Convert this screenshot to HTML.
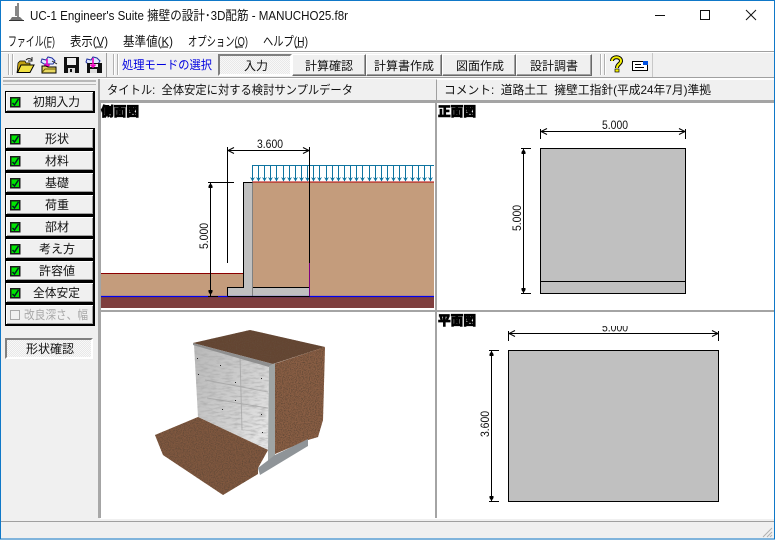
<!DOCTYPE html>
<html lang="ja"><head><meta charset="utf-8"><title>UC-1</title>
<style>
html,body{margin:0;padding:0;width:775px;height:540px;overflow:hidden;background:#f0f0f0}
#w{position:relative;width:775px;height:540px;overflow:hidden;background:#f0f0f0;font-family:"Liberation Sans","Noto Sans CJK JP",sans-serif}
.a{position:absolute;box-sizing:border-box}
.lb{background:#f0f0f0;border:1px solid #000;border-right:2px solid #000;border-bottom:2px solid #000;box-shadow:inset 1px 1px 0 #fff,inset -1px -1px 0 #a0a0a0}
.tb{background:#f0f0f0;border:1px solid;border-color:#fff #696969 #696969 #fff;box-shadow:inset -1px -1px 0 #a0a0a0}
svg{position:absolute;left:0;top:0}
text{font-family:"Liberation Sans","Noto Sans CJK JP",sans-serif;font-size:12px;fill:#111}
</style></head><body><div id="w">
<div class="a" style="left:0;top:0;width:775px;height:51px;background:#fff"></div>
<div class="a" style="left:0;top:51px;width:775px;height:1px;background:#a0a0a0"></div>
<div class="a" style="left:0;top:52px;width:775px;height:1px;background:#fff"></div>
<div class="a" style="left:3px;top:77px;width:772px;height:1px;background:#a0a0a0"></div>
<div class="a" style="left:3px;top:78px;width:772px;height:1px;background:#fff"></div>
<div class="a" style="left:106px;top:53px;width:1px;height:24px;background:#a0a0a0"></div>
<div class="a" style="left:652px;top:53px;width:1px;height:24px;background:#c8c8c8"></div>
<div class="a" style="left:218px;top:54px;width:74px;height:22px;border:2px solid;border-color:#808080 #fff #fff #808080;background:repeating-conic-gradient(#f8f8f8 0 25%,#e8e8e8 0 50%) 0 0/2px 2px"></div>
<div class="a tb" style="left:292px;top:54px;width:74px;height:22px"></div>
<div class="a tb" style="left:366px;top:54px;width:76px;height:22px"></div>
<div class="a tb" style="left:442px;top:54px;width:74px;height:22px"></div>
<div class="a tb" style="left:516px;top:54px;width:76px;height:22px"></div>
<div class="a" style="left:100px;top:79px;width:335px;height:22px;background:#f0f0f0"></div>
<div class="a" style="left:436px;top:79px;width:339px;height:22px;background:#f0f0f0;border-left:1px solid #a0a0a0;border-top:1px solid #fff"></div>
<div class="a" style="left:3px;top:80px;width:93px;height:2px;background:#b8b8b8"></div>
<div class="a" style="left:3px;top:84px;width:93px;height:1px;background:#b8b8b8"></div>
<div class="a" style="left:98px;top:79px;width:2px;height:439px;background:#a8a8a8"></div>
<div class="a" style="left:100px;top:100px;width:674px;height:419px;background:#fff"></div>
<div class="a" style="left:100px;top:100px;width:674px;height:3px;background:#a4a4a4"></div>
<div class="a" style="left:100px;top:310px;width:674px;height:2px;background:#a4a4a4"></div>
<div class="a" style="left:435px;top:100px;width:2px;height:418px;background:#a4a4a4"></div>
<div class="a" style="left:100px;top:100px;width:1px;height:418px;background:#a4a4a4"></div>
<div class="a" style="left:0;top:521px;width:775px;height:1px;background:#a0a0a0"></div>
<div class="a lb" style="left:5px;top:91px;width:90px;height:22px"></div>
<div class="a lb" style="left:5px;top:128px;width:90px;height:22px"></div>
<div class="a lb" style="left:5px;top:150px;width:90px;height:22px"></div>
<div class="a lb" style="left:5px;top:172px;width:90px;height:22px"></div>
<div class="a lb" style="left:5px;top:194px;width:90px;height:22px"></div>
<div class="a lb" style="left:5px;top:216px;width:90px;height:22px"></div>
<div class="a lb" style="left:5px;top:238px;width:90px;height:22px"></div>
<div class="a lb" style="left:5px;top:260px;width:90px;height:22px"></div>
<div class="a lb" style="left:5px;top:282px;width:90px;height:22px"></div>
<div class="a lb" style="left:5px;top:304px;width:90px;height:22px"></div>
<div class="a" style="left:5px;top:338px;width:88px;height:21px;border:2px solid;border-color:#808080 #fff #fff #808080;background:repeating-conic-gradient(#f8f8f8 0 25%,#e8e8e8 0 50%) 0 0/2px 2px"></div>

<svg width="775" height="540" viewBox="0 0 775 540" xmlns="http://www.w3.org/2000/svg">
<defs>
<g id="ar"><path d="M0 0V16" fill="none" stroke="#0f74a0"/><path d="M-2.500 12 0 16.500 2.500 12 0 13.500Z" fill="#0f74a0"/></g>
<filter id="soil" x="0" y="0" width="100%" height="100%"><feTurbulence type="fractalNoise" baseFrequency=".85" numOctaves="2" seed="4"/><feColorMatrix values="0 0 0 0 .13 0 0 0 0 .07 0 0 0 0 .04 0 0 0 3 -1.200"/><feComposite in2="SourceGraphic" operator="in" result="n"/><feMerge><feMergeNode in="SourceGraphic"/><feMergeNode in="n"/></feMerge></filter>
<filter id="conc" x="0" y="0" width="100%" height="100%"><feTurbulence type="fractalNoise" baseFrequency=".12 .5" numOctaves="3" seed="7"/><feColorMatrix values="0 0 0 0 .4 0 0 0 0 .4 0 0 0 0 .4 0 0 0 1.800 -.750"/><feComposite in2="SourceGraphic" operator="in" result="n"/><feMerge><feMergeNode in="SourceGraphic"/><feMergeNode in="n"/></feMerge></filter>
<linearGradient id="cg" x1="0" y1="0" x2="1" y2=".7"><stop offset="0" stop-color="#b8b8b8"/><stop offset=".65" stop-color="#d0d0d0"/><stop offset="1" stop-color="#e4e4e4"/></linearGradient>
<clipPath id="clipPlan"><rect x="438" y="326" width="336" height="30"/></clipPath>
</defs>

<rect x=".5" y=".5" width="774" height="538.500" fill="none" stroke="#0f78c8"/>

<path d="M16 6V16M18 3V17" stroke="#555" stroke-width="1.400" fill="none"/>
<path d="M12 17H20L23 20H10Z" fill="#777"/><path d="M9 20.500H24" stroke="#333"/>
<text x="30" y="20" textLength="318" lengthAdjust="spacingAndGlyphs" style="font-size:13px">UC-1 Engineer's Suite 擁壁の設計･3D配筋 - MANUCHO25.f8r</text>

<path d="M655 15.500H665" stroke="#111"/>
<rect x="700.500" y="10.500" width="9" height="9" fill="none" stroke="#111"/>
<path d="M746 10 756 20M756 10 746 20" stroke="#111" fill="none"/>

<text x="8" y="46" textLength="47" lengthAdjust="spacingAndGlyphs" style="font-size:13px">ファイル(F)</text><path d="M47 47H51" stroke="#111"/>
<text x="70" y="46" textLength="38" lengthAdjust="spacingAndGlyphs" style="font-size:13px">表示(V)</text><path d="M96 47H103" stroke="#111"/>
<text x="123" y="46" textLength="50" lengthAdjust="spacingAndGlyphs" style="font-size:13px">基準値(K)</text><path d="M161 47H168" stroke="#111"/>
<text x="188" y="46" textLength="60" lengthAdjust="spacingAndGlyphs" style="font-size:13px">オプション(O)</text><path d="M235 47H243" stroke="#111"/>
<text x="263" y="46" textLength="45" lengthAdjust="spacingAndGlyphs" style="font-size:13px">ヘルプ(H)</text><path d="M295 47H303" stroke="#111"/>

<path d="M8.500 54V75M12.500 54V75M113.500 54V75M117.500 54V75M600.500 54V75M604.500 54V75" stroke="#b0b0b0"/>
<path d="M9.500 54V75M13.500 54V75M114.500 54V75M118.500 54V75M601.500 54V75M605.500 54V75" stroke="#fff"/>

<path d="M18 63 20 61H25L26 63H30V65H22L17 73Z" fill="#c0a010" stroke="#000" stroke-width=".7"/>
<path d="M17.500 72.500 21 65H34L30 72.500Z" fill="#f0e040" stroke="#000"/>
<path d="M26 60C28 58 30 58 32 60M32 57V61H28" fill="none" stroke="#222"/>
<path d="M44 64 41 62 42 59 46 60 48 57 52 58 55 61 53 64Z" fill="#dfe8ff" stroke="#2030a0"/>
<path d="M47 59V67M44.500 64.500 47 67 49.500 64.500" fill="none" stroke="#f000c0" stroke-width="1.600"/>
<path d="M42 73V66H46L48 67H56V73Z" fill="#e8d860" stroke="#000"/>
<path d="M42 72.500 45 69H56" fill="none" stroke="#6a5a00"/>
<path d="M52 61 57 64" stroke="#222" fill="none"/>
<path d="M64 57H79V73H64Z" fill="#111"/><rect x="67" y="58" width="9" height="7" fill="#eee"/><rect x="68" y="68" width="7" height="5" fill="#ddd"/><rect x="70" y="69" width="2" height="3" fill="#111"/>
<path d="M88 64 86 62 87 59 91 60 93 57 97 58 100 61 98 64Z" fill="#dfe8ff" stroke="#2030a0"/>
<path d="M87 63H102V73H87Z" fill="#111"/><rect x="90" y="64" width="8" height="3" fill="#eee"/><rect x="90" y="69" width="7" height="4" fill="#ddd"/>
<path d="M93 58V67M90.500 64.500 93 67 95.500 64.500" fill="none" stroke="#f000c0" stroke-width="1.600"/>

<text x="122" y="69" textLength="90" lengthAdjust="spacingAndGlyphs" style="fill:#0000e0">処理モードの選択</text>
<text x="244" y="70" textLength="24" lengthAdjust="spacingAndGlyphs">入力</text>
<text x="305" y="70" textLength="48" lengthAdjust="spacingAndGlyphs">計算確認</text>
<text x="374" y="70" textLength="60" lengthAdjust="spacingAndGlyphs">計算書作成</text>
<text x="456" y="70" textLength="48" lengthAdjust="spacingAndGlyphs">図面作成</text>
<text x="530" y="70" textLength="48" lengthAdjust="spacingAndGlyphs">設計調書</text>

<path d="M612 61C612 56 621 56 621 61C621 64 617 64 617 68" fill="none" stroke="#000" stroke-width="4"/>
<path d="M612 61C612 56 621 56 621 61C621 64 617 64 617 68" fill="none" stroke="#f4f000" stroke-width="2"/>
<rect x="615" y="69" width="4" height="3" fill="#f4f000" stroke="#000" stroke-width=".7"/>
<rect x="632.500" y="61.500" width="15" height="9" fill="#fff" stroke="#000"/>
<rect x="643" y="61" width="5" height="4" fill="#0050e0"/>
<path d="M635 64.500H641M635 67.500H644" stroke="#000"/>

<text x="107" y="94" textLength="246" lengthAdjust="spacingAndGlyphs">タイトル:&#160; 全体安定に対する検討サンプルデータ</text>
<text x="444" y="94" textLength="267" lengthAdjust="spacingAndGlyphs">コメント:&#160; 道路土工&#160; 擁壁工指針(平成24年7月)準拠</text>

<g stroke="#1a1a1a" stroke-width="1.500" fill="#00e600">
<rect x="10.750" y="97.750" width="9" height="9"/><rect x="10.750" y="134.750" width="9" height="9"/><rect x="10.750" y="156.750" width="9" height="9"/><rect x="10.750" y="178.750" width="9" height="9"/><rect x="10.750" y="200.750" width="9" height="9"/><rect x="10.750" y="222.750" width="9" height="9"/><rect x="10.750" y="244.750" width="9" height="9"/><rect x="10.750" y="266.750" width="9" height="9"/><rect x="10.750" y="288.750" width="9" height="9"/>
</g>
<g fill="none" stroke="#022" stroke-width="1.500">
<path d="M12.500 103 14.500 105 18.500 99M12.500 140 14.500 142 18.500 136M12.500 162 14.500 164 18.500 158M12.500 184 14.500 186 18.500 180M12.500 206 14.500 208 18.500 202M12.500 228 14.500 230 18.500 224M12.500 250 14.500 252 18.500 246M12.500 272 14.500 274 18.500 268M12.500 294 14.500 296 18.500 290"/>
</g>
<rect x="10.500" y="310.500" width="9" height="9" fill="none" stroke="#a8a8a8"/>

<text x="33" y="106" textLength="47" lengthAdjust="spacingAndGlyphs">初期入力</text>
<text x="45" y="143" textLength="24" lengthAdjust="spacingAndGlyphs">形状</text>
<text x="45" y="165" textLength="24" lengthAdjust="spacingAndGlyphs">材料</text>
<text x="45" y="187" textLength="24" lengthAdjust="spacingAndGlyphs">基礎</text>
<text x="45" y="209" textLength="24" lengthAdjust="spacingAndGlyphs">荷重</text>
<text x="45" y="231" textLength="24" lengthAdjust="spacingAndGlyphs">部材</text>
<text x="39" y="253" textLength="36" lengthAdjust="spacingAndGlyphs">考え方</text>
<text x="39" y="275" textLength="36" lengthAdjust="spacingAndGlyphs">許容値</text>
<text x="33" y="297" textLength="47" lengthAdjust="spacingAndGlyphs">全体安定</text>
<text x="24" y="319" textLength="64" lengthAdjust="spacingAndGlyphs" style="fill:#a8a8a8">改良深さ、幅</text>
<text x="26" y="353" textLength="48" lengthAdjust="spacingAndGlyphs">形状確認</text>

<!-- side view -->
<rect x="101" y="297" width="333" height="11" fill="#7f3f3f"/>
<rect x="101" y="274" width="143" height="22" fill="#c49c7c"/>
<rect x="252" y="182" width="182" height="114" fill="#c49c7c"/>
<path d="M101 273.500H243" stroke="#8b0000"/>
<path d="M252 182H434" stroke="#b00000"/>
<path d="M243.500 182.500H252.500V287.500H309.500V296.500H227.500V287.500H243.500Z" fill="#c0c0c0" stroke="#000"/>
<path d="M252.500 182.500V296" stroke="#808080"/>
<path d="M101 296.500H434" stroke="#0000f0" stroke-width="1.200"/>
<path d="M227.500 296.500H309.500" stroke="#000"/>
<g transform="translate(0,165)">
<use href="#ar" x="252.500"/><use href="#ar" x="258.500"/><use href="#ar" x="264.500"/><use href="#ar" x="270.500"/><use href="#ar" x="276.500"/><use href="#ar" x="283.500"/><use href="#ar" x="289.500"/><use href="#ar" x="295.500"/><use href="#ar" x="301.500"/><use href="#ar" x="307.500"/><use href="#ar" x="313.500"/><use href="#ar" x="319.500"/><use href="#ar" x="326.500"/><use href="#ar" x="332.500"/><use href="#ar" x="338.500"/><use href="#ar" x="344.500"/><use href="#ar" x="350.500"/><use href="#ar" x="356.500"/><use href="#ar" x="362.500"/><use href="#ar" x="369.500"/><use href="#ar" x="375.500"/><use href="#ar" x="381.500"/><use href="#ar" x="387.500"/><use href="#ar" x="393.500"/><use href="#ar" x="399.500"/><use href="#ar" x="405.500"/><use href="#ar" x="412.500"/><use href="#ar" x="418.500"/><use href="#ar" x="424.500"/><use href="#ar" x="430.500"/>
</g>
<path d="M252 165.500H434" stroke="#0f74a0"/>
<g fill="none" stroke="#000">
<path d="M227.500 147V263M309.500 147V263M228 150.500H309"/>
<path d="M234 147.500 228 150.500 234 153.500M303 147.500 309 150.500 303 153.500"/>
<path d="M208 182.500H234M208 296.500H218M210.500 182V296"/>
</g>
<path d="M309.500 263V296" stroke="#800080"/>
<path d="M208.500 186 210.500 183 212.500 186V188H208.500ZM208.500 292 210.500 295 212.500 292V290H208.500Z" fill="#000"/>
<text x="257" y="148" textLength="26" lengthAdjust="spacingAndGlyphs">3.600</text>
<text transform="translate(208,249) rotate(-90)" x="0" y="0" textLength="26" lengthAdjust="spacingAndGlyphs">5.000</text>
<text x="101" y="116" textLength="38" lengthAdjust="spacingAndGlyphs" style="font-size:13px;font-weight:900;fill:#000;stroke:#000;stroke-width:.7">側面図</text>

<!-- front view -->
<rect x="540.500" y="148.500" width="145" height="145" fill="#c0c0c0" stroke="#000"/>
<path d="M540.500 281.500H685.500" stroke="#000"/>
<g fill="none" stroke="#000">
<path d="M540.500 129V139M685.500 129V139M541 131.500H685M547 128.500 541 131.500 547 134.500M679 128.500 685 131.500 679 134.500"/>
<path d="M521 148.500H531M521 293.500H531M523.500 149V293"/>
</g>
<path d="M521.500 152 523.500 149 525.500 152V154H521.500ZM521.500 290 523.500 293 525.500 290V288H521.500Z" fill="#000"/>
<text x="602" y="129" textLength="26" lengthAdjust="spacingAndGlyphs">5.000</text>
<text transform="translate(521,231) rotate(-90)" textLength="26" lengthAdjust="spacingAndGlyphs">5.000</text>
<text x="438" y="116" textLength="38" lengthAdjust="spacingAndGlyphs" style="font-size:13px;font-weight:900;fill:#000;stroke:#000;stroke-width:.7">正面図</text>

<!-- plan view -->
<rect x="508.500" y="350.500" width="210" height="151" fill="#c0c0c0" stroke="#000"/>
<g fill="none" stroke="#000">
<path d="M508.500 331V341M718.500 331V341M509 333.500H718M515 330.500 509 333.500 515 336.500M712 330.500 718 333.500 712 336.500"/>
<path d="M489 350.500H499M489 501.500H499M491.500 351V501"/>
</g>
<path d="M489.500 354 491.500 351 493.500 354V356H489.500ZM489.500 498 491.500 501 493.500 498V496H489.500Z" fill="#000"/>
<g clip-path="url(#clipPlan)"><text x="602" y="331.500" textLength="26" lengthAdjust="spacingAndGlyphs">5.000</text></g>
<text transform="translate(489,437) rotate(-90)" textLength="26" lengthAdjust="spacingAndGlyphs">3.600</text>
<text x="438" y="325" textLength="38" lengthAdjust="spacingAndGlyphs" style="font-size:13px;font-weight:900;fill:#000;stroke:#000;stroke-width:.7">平面図</text>

<!-- 3D view -->
<path d="M193 343 250 330 325 347 273 364Z" fill="#644432" filter="url(#soil)"/>
<path d="M274 364 325 347 323 420 318 437 308 440 275 454Z" fill="#8a5e45" filter="url(#soil)"/>
<path d="M194 344 269 366 268 450 198 417Z" fill="url(#cg)" filter="url(#conc)"/>
<path d="M205 380 268 392M207 398 268 408M240 356 242 430" stroke="#9a9a9a" fill="none" opacity=".6"/>
<g fill="#222"><rect x="197" y="358" width="1" height="1"/><rect x="198" y="374" width="1" height="1"/><rect x="220" y="365" width="1" height="1"/><rect x="261" y="378" width="1" height="1"/><rect x="235" y="382" width="1" height="1"/><rect x="235" y="400" width="1" height="1"/><rect x="261" y="414" width="1" height="1"/><rect x="262" y="432" width="1" height="1"/><rect x="222" y="409" width="1" height="1"/></g>
<path d="M193 343 273 364 269 367 193 345Z" fill="#8f8f8f"/>
<path d="M269 366 275 363 275 456 268 462 268 450Z" fill="#9fa4a4"/>
<path d="M258 468 275 455 308 439 308 446 260 475Z" fill="#8f9498"/>
<path d="M155 435 198 417 268 450 258 468 258 474 223 495 163 455Z" fill="#80593f" filter="url(#soil)"/>

<path d="M772 528 763 537M772 532 767 537M772 535 770 537" stroke="#b0b0b0" fill="none"/>
</svg>
</div></body></html>
